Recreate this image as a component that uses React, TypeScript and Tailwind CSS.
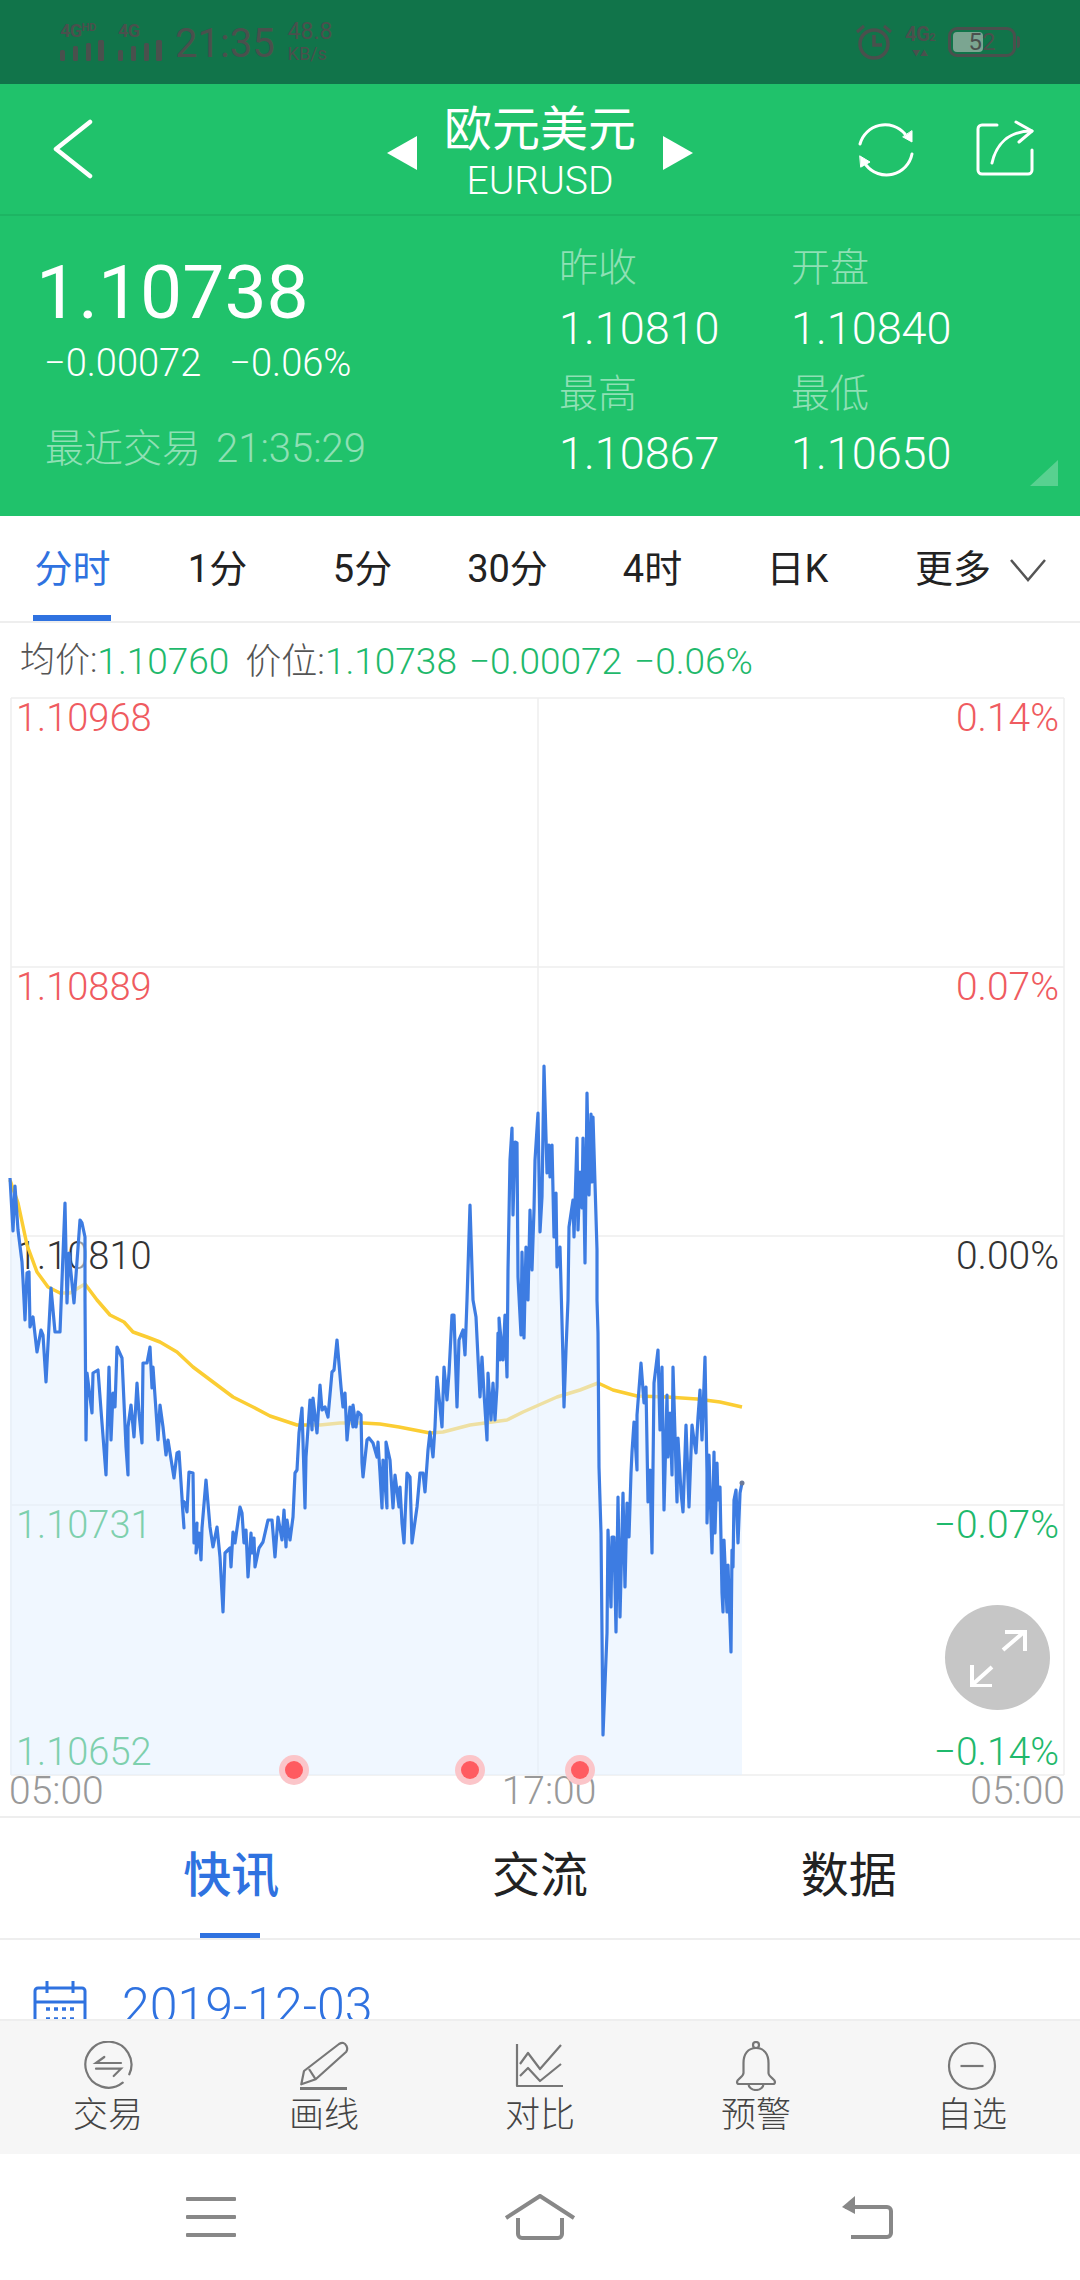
import React from 'react';

const price = '10,1178 13,1231 15,1186 18,1230 22,1262 23,1280 25,1320 27,1273 29,1272 30,1327 33,1317 37,1352 41,1330 43,1335 46,1382 51,1288 55,1332 60,1332 65,1203 67,1303 69,1253 74,1303 80,1220 82,1223 85,1237 85,1300 86,1440 87,1373 92,1413 93,1373 98,1370 101,1410 106,1475 109,1367 111,1440 113,1393 115,1407 117,1347 122,1358 126,1447 128,1475 128,1427 131,1405 134,1437 137,1383 139,1413 142,1443 143,1363 147,1363 150,1347 152,1388 153,1367 158,1440 160,1405 163,1427 166,1455 168,1440 174,1478 177,1453 179,1452 184,1528 182,1500 185,1503 187,1512 189,1472 193,1473 194,1543 197,1523 196,1553 199,1533 201,1560 202,1528 206,1480 210,1527 213,1547 217,1527 220,1557 223,1612 225,1553 230,1548 231,1567 233,1532 235,1543 240,1507 242,1513 244,1543 246,1530 248,1577 251,1533 252,1553 254,1538 255,1567 259,1548 263,1542 268,1520 272,1520 275,1557 278,1517 282,1540 284,1510 286,1547 287,1520 290,1540 293,1517 295,1473 297,1470 299,1433 302,1408 305,1508 306,1457 310,1400 312,1430 313,1398 317,1433 320,1385 322,1410 325,1407 328,1417 332,1372 334,1370 337,1340 341,1387 343,1407 345,1393 347,1440 350,1407 353,1427 353,1405 356,1427 358,1412 361,1415 362,1463 363,1477 367,1440 369,1438 373,1443 377,1457 378,1442 380,1473 382,1508 383,1460 387,1508 386,1442 390,1460 393,1508 395,1475 399,1507 400,1487 402,1523 404,1543 407,1473 410,1477 412,1543 417,1507 420,1473 423,1473 425,1492 428,1450 430,1432 433,1457 435,1427 437,1377 442,1427 444,1367 447,1400 449,1373 452,1315 454,1315 457,1407 459,1340 463,1330 465,1355 467,1300 470,1205 473,1300 476,1317 478,1358 480,1397 482,1357 484,1393 487,1440 488,1373 491,1420 493,1383 495,1420 497,1387 498,1333 500,1360 499,1318 503,1360 505,1315 507,1377 508,1270 510,1160 512,1128 513,1215 515,1142 517,1143 518,1277 521,1335 522,1252 524,1338 526,1247 528,1300 530,1210 532,1270 534,1210 535,1160 538,1113 540,1232 542,1197 544,1066 547,1173 549,1145 550,1177 552,1145 554,1237 556,1193 557,1267 560,1247 563,1360 564,1407 566,1350 568,1300 569,1227 573,1200 574,1237 577,1138 578,1230 580,1172 582,1208 583,1138 585,1263 587,1093 589,1195 591,1114 592,1182 593,1117 597,1250 597,1300 598,1333 599,1467 601,1533 602,1633 603,1735 607,1633 608,1530 611,1607 612,1537 614,1537 616,1632 618,1497 620,1617 623,1493 625,1587 627,1503 629,1537 631,1473 632,1452 634,1422 637,1470 637,1415 641,1363 644,1403 646,1387 648,1502 650,1470 652,1553 654,1383 658,1350 660,1430 662,1367 664,1510 667,1395 668,1457 670,1413 672,1475 673,1367 677,1502 678,1438 681,1492 683,1512 686,1425 689,1507 692,1425 694,1440 696,1453 698,1417 700,1390 702,1440 705,1357 707,1473 707,1523 709,1455 712,1553 714,1452 715,1533 717,1463 718,1500 720,1487 722,1593 723,1612 724,1540 727,1612 728,1565 731,1652 732,1550 733,1567 734,1500 736,1490 738,1543 740,1493 742,1483';

const avg = '10,1180 18,1203 27,1245 37,1272 48,1287 60,1293 70,1293 85,1284 97,1300 110,1315 124,1322 133,1332 147,1337 160,1342 177,1352 193,1367 213,1382 233,1397 253,1407 270,1416 297,1425 320,1425 340,1423 363,1423 380,1424 399,1427 430,1433 443,1432 470,1425 507,1420 523,1412 557,1397 580,1390 598,1383 613,1390 637,1396 667,1397 697,1399 720,1402 742,1407';

const periods = ['分时', '1分', '5分', '30分', '4时', '日K'];

const leftLabels = [
  { text: '1.10968', y: 'top-[1px]', color: 'text-[#ef5b60]' },
  { text: '1.10889', y: 'top-[270px]', color: 'text-[#ef5b60]' },
  { text: '1.10810', y: 'top-[539px]', color: 'text-[#333333]' },
  { text: '1.10731', y: 'top-[808px]', color: 'text-[#00a84a]' },
  { text: '1.10652', y: 'top-[1035px]', color: 'text-[#00a84a]' },
];

const rightLabels = [
  { text: '0.14%', y: 'top-[1px]', color: 'text-[#ef5b60]' },
  { text: '0.07%', y: 'top-[270px]', color: 'text-[#ef5b60]' },
  { text: '0.00%', y: 'top-[539px]', color: 'text-[#333333]' },
  { text: '−0.07%', y: 'top-[808px]', color: 'text-[#1fb96c]' },
  { text: '−0.14%', y: 'top-[1035px]', color: 'text-[#1fb96c]' },
];

const Signal = ({ hd }: { hd?: boolean }) => (
  <div className="flex flex-col">
    <span className="h-[15px] text-[18px] leading-[15px] font-bold tracking-[-0.5px]">
      4G{hd && <span className="text-[11px] align-top leading-[10px]">HD</span>}
    </span>
    <svg className="mt-[2px]" width="46" height="21" viewBox="0 0 46 21" fill="currentColor">
      <rect x="0" y="10" width="5" height="11" rx="1.5" />
      <rect x="13" y="6" width="5" height="15" rx="1.5" />
      <rect x="26" y="3" width="5" height="18" rx="1.5" />
      <rect x="38" y="0" width="6" height="21" rx="1.5" />
    </svg>
  </div>
);

const StatusBar = () => (
  <div className="h-[84px] bg-[#11744a] flex items-center justify-between pl-[60px] pr-[60px] text-[#4a504d] shrink-0">
    <div className="flex items-center">
      <Signal hd />
      <div className="ml-[12px]"><Signal /></div>
      <span className="text-[40px] leading-none ml-[11px] mt-[4px]">21:35</span>
      <div className="ml-[13px] flex flex-col text-[18px] leading-[20px]">
        <span className="text-[23px] leading-[24px]">48.8</span>
        <span>KB/s</span>
      </div>
    </div>
    <div className="flex items-center">
      <svg width="36" height="36" viewBox="0 0 36 36" fill="none" stroke="currentColor" strokeWidth="3.5">
        <circle cx="18" cy="20" r="14" />
        <path d="M18 11v10h8" />
        <path d="M1 8l7-6M35 8l-7-6" strokeWidth="3" />
      </svg>
      <div className="ml-[10px] flex flex-col items-center w-[36px]">
        <span className="text-[20px] leading-[20px] font-bold tracking-[-0.5px]">4G<span className="text-[11px]">2</span></span>
        <span className="text-[8px] leading-[12px]">▼▲</span>
      </div>
      <div className="ml-[10px] mr-[4px] relative w-[68px] h-[30px] rounded-[9px] border-[3px] border-current flex items-center justify-center text-[24px] leading-none">
        <div className="absolute left-[2px] top-[2px] bottom-[2px] w-[30px] rounded-[4px] bg-[#7ba591]" />
        <span className="relative">52</span>
        <div className="absolute right-[-7px] top-[6px] h-[12px] w-[3px] bg-current rounded-r" />
      </div>
    </div>
  </div>
);

const Header = () => (
  <div className="h-[132px] grid grid-cols-[1fr_auto_1fr] items-center border-b-2 border-[#1db563] shrink-0 text-white">
    <div className="pl-[53px] flex">
      <svg width="40" height="60" viewBox="0 0 40 60" fill="none" stroke="white" strokeWidth="4.5" strokeLinecap="round" strokeLinejoin="round">
        <path d="M37 3 3 30l34 27" />
      </svg>
    </div>
    <div className="flex items-center gap-[24px]">
      <svg width="30" height="34" viewBox="0 0 30 34" fill="white" className="mt-[8px]"><path d="M30 0v34L0 17z" /></svg>
      <div className="flex flex-col items-center w-[198px] mt-[6px]">
        <span className="text-[48px] leading-[58px]">欧元美元</span>
        <span className="text-[39px] leading-[44px] font-light">EURUSD</span>
      </div>
      <svg width="30" height="34" viewBox="0 0 30 34" fill="white" className="mt-[8px]"><path d="M0 0v34l30-17z" /></svg>
    </div>
    <div className="flex justify-end items-center gap-[62px] pr-[46px]">
      <svg width="58" height="58" viewBox="0 0 58 58" fill="none" stroke="white" strokeWidth="3" strokeLinecap="round">
        <path d="M4 24A26 26 0 0 1 49 14" />
        <path d="M56 34A26 26 0 0 1 10 45" />
        <path d="M56 11v11l-9-5z" fill="white" strokeWidth="1" />
        <path d="M4 36l10 6-9 5z" fill="white" strokeWidth="1" />
      </svg>
      <svg width="58" height="58" viewBox="0 0 58 58" fill="none" stroke="white" strokeWidth="3" strokeLinecap="round" strokeLinejoin="round">
        <path d="M21 5H6a4 4 0 0 0-4 4v41a4 4 0 0 0 4 4h46a4 4 0 0 0 4-4V30" />
        <path d="M16 43C20 25 32 11 56 11" />
        <path d="M40 2l16 9-13 11" />
      </svg>
    </div>
  </div>
);

const Quote = () => (
  <div className="relative h-[300px] shrink-0 flex text-white">
    <div className="w-[559px] pl-[36px] pt-[32px] flex flex-col">
      <span className="text-[75px] leading-[88px]">1.10738</span>
      <div className="flex gap-[28px] pl-[8px] mt-[3px] text-[38px] leading-[48px] font-light">
        <span>−0.00072</span>
        <span>−0.06%</span>
      </div>
      <div className="flex items-center gap-[15px] pl-[9px] mt-[37px] leading-[50px] font-light text-white/50">
        <span className="text-[39px]">最近交易</span>
        <span className="text-[40px]">21:35:29</span>
      </div>
    </div>
    <div className="flex-1 grid grid-cols-[232px_1fr] content-start pt-[21px] text-[45px] leading-[62px] font-light">
      <div className="text-[39px] text-white/50">昨收</div>
      <div className="text-[39px] text-white/50">开盘</div>
      <div className="-mt-[1px]">1.10810</div>
      <div className="-mt-[1px]">1.10840</div>
      <div className="mt-[3px] text-[39px] text-white/50">最高</div>
      <div className="mt-[3px] text-[39px] text-white/50">最低</div>
      <div className="-mt-[2px]">1.10867</div>
      <div className="-mt-[2px]">1.10650</div>
    </div>
    <svg className="absolute right-[22px] bottom-[30px]" width="28" height="26" viewBox="0 0 28 26" fill="white" fillOpacity="0.25"><path d="M28 0v26H0z" /></svg>
  </div>
);

const Periods = () => (
  <div className="h-[107px] bg-white border-b-2 border-[#eeeeee] flex shrink-0 text-[38px] text-[#222222]">
    {periods.map((p, i) => (
      <div key={p} className="relative w-[145px] flex items-center justify-center pt-[2px]">
        <span className={i === 0 ? 'text-[#2f72e0]' : ''}>{p}</span>
        {i === 0 && <div className="absolute bottom-0 left-[33px] w-[78px] h-[6px] bg-[#2f72e0]" />}
      </div>
    ))}
    <div className="flex-1 flex items-center pl-[45px] gap-[18px] pt-[2px]">
      <span>更多</span>
      <svg width="38" height="24" viewBox="0 0 38 24" fill="none" stroke="#555555" strokeWidth="2.5"><path d="M2 2l17 20L36 2" /></svg>
    </div>
  </div>
);

const InfoLine = () => (
  <div className="h-[74px] bg-white flex items-center pl-[20px] pt-[3px] text-[37px] font-light text-[#555555] shrink-0">
    <span className="text-[35px]">均价:</span>
    <span className="text-[#1fb96c]">1.10760</span>
    <span className="ml-[16px] text-[36px]">价位:</span>
    <span className="text-[#1fb96c]">1.10738</span>
    <span className="ml-[12px] text-[#1fb96c]">−0.00072</span>
    <span className="ml-[12px] text-[#1fb96c]">−0.06%</span>
  </div>
);

const Chart = () => (
  <div className="relative h-[1079px] bg-white shrink-0">
    {leftLabels.map(l => (
      <span key={l.text} className={`absolute left-[16px] text-[38px] leading-[40px] font-light ${l.y} ${l.color}`}>{l.text}</span>
    ))}
    {rightLabels.map(l => (
      <span key={l.text} className={`absolute right-[21px] text-[39px] leading-[40px] font-light ${l.y} ${l.color}`}>{l.text}</span>
    ))}
    <svg className="absolute inset-0 overflow-visible" width="1080" height="1079" viewBox="0 697 1080 1079" fill="none">
      {[698, 967, 1236, 1505, 1775].map(y => (
        <line key={y} x1="11" x2="1064" y1={y} y2={y} stroke="#eeeeee" strokeWidth="1.5" />
      ))}
      {[11, 538, 1064].map(x => (
        <line key={x} x1={x} x2={x} y1="698" y2="1775" stroke="#eeeeee" strokeWidth="1.5" />
      ))}
      <polyline points={avg} stroke="#fbcd33" strokeWidth="3.5" strokeLinejoin="round" />
      <polygon points={`${price} 742,1775 10,1775`} fill="#e4f0ff" fillOpacity="0.55" />
      <polyline points={price} stroke="#3d7ce2" strokeWidth="3.2" strokeLinejoin="round" />
      <circle cx="742" cy="1483" r="2.5" fill="#6c7a99" />
      {[294, 470, 580].map(x => (
        <g key={x}>
          <circle cx={x} cy="1770" r="15" fill="#fbc5c9" />
          <circle cx={x} cy="1770" r="9" fill="#ff5b60" />
        </g>
      ))}
    </svg>
    <div className="absolute left-[945px] top-[908px] w-[105px] h-[105px] rounded-full bg-[#c6c6c6] flex items-center justify-center">
      <svg width="58" height="58" viewBox="0 0 58 58" fill="none" stroke="white" strokeWidth="4">
        <path d="M34 21 55 3M36 3h20v19M23 38 3 56M3 36v21h20" />
      </svg>
    </div>
  </div>
);

const TimeAxis = () => (
  <div className="h-[42px] bg-white border-b-2 border-[#eeeeee] flex justify-between pl-[9px] pr-[15px] text-[39px] leading-[30px] font-light text-[#999999] shrink-0">
    <span>05:00</span>
    <span className="ml-[24px]">17:00</span>
    <span>05:00</span>
  </div>
);

const SectionTabs = () => (
  <div className="h-[122px] bg-white border-b-2 border-[#eeeeee] px-[77px] grid grid-cols-3 text-[48px] text-[#222222] shrink-0">
    <div className="relative flex items-center justify-center pb-[4px] font-medium text-[#2f72e0]">
      快讯
      <div className="absolute bottom-0 left-[123px] w-[60px] h-[5px] bg-[#2f72e0]" />
    </div>
    <div className="flex items-center justify-center pb-[4px]">交流</div>
    <div className="flex items-center justify-center pb-[4px]">数据</div>
  </div>
);

const DateRow = () => (
  <div className="h-[79px] bg-white overflow-hidden flex items-start pl-[33px] gap-[35px] pt-[40px] shrink-0">
    <svg width="54" height="60" viewBox="0 0 54 60" fill="none" stroke="#2f72e0" strokeWidth="3">
      <rect x="2" y="8" width="50" height="50" rx="3" />
      <path d="M2 22h50M14 1v12M40 1v12" />
      <path d="M13 29h28M13 39h28" strokeDasharray="4 4" strokeWidth="3.5" />
    </svg>
    <span className="text-[50px] leading-[56px] font-light text-[#2f72e0] -mt-[2px]">2019-12-03</span>
  </div>
);

const ToolIcon = ({ name }: { name: string }) => {
  if (name === '交易') {
    return (
      <svg width="50" height="50" viewBox="0 0 50 50" fill="none" stroke="#777777" strokeWidth="2.2" strokeLinecap="round">
        <path d="M39.7 41.7A23 23 0 1 1 46.3 33.3" />
        <path d="M21.3 16 13 22H38M13 27.7H38L30.7 35" />
      </svg>
    );
  }
  if (name === '画线') {
    return (
      <svg width="50" height="50" viewBox="0 0 50 50" fill="none" stroke="#777777" strokeWidth="2.2" strokeLinejoin="round">
        <path d="M5 30 40 3Q45 0 47.5 5 49 8 47.3 10.7L16.7 38.3 2.3 43.3Z" />
        <path d="M10 28 16.7 38.3" />
        <path d="M1 47.5H48" strokeWidth="3" />
      </svg>
    );
  }
  if (name === '对比') {
    return (
      <svg width="50" height="50" viewBox="0 0 50 50" fill="none" stroke="#777777" strokeWidth="2.2" strokeLinejoin="round">
        <path d="M2 3V45H48" />
        <path d="M5 23 13 12 25 28 46 4" />
        <path d="M5 35 13 27 25 40 46 23" />
      </svg>
    );
  }
  if (name === '预警') {
    return (
      <svg width="42" height="50" viewBox="0 0 42 50" fill="none" stroke="#777777" strokeWidth="2.2" strokeLinejoin="round">
        <path d="M21 7C13 7 8.5 13 8.5 22V32C8.5 36 2 38 2 41Q2 43 4 43H38Q40 43 40 41C40 38 33.5 36 33.5 32V22C33.5 13 29 7 21 7Z" />
        <path d="M13.5 43a7.5 6 0 0 0 15 0" />
        <circle cx="21" cy="4" r="3" />
      </svg>
    );
  }
  return (
    <svg width="50" height="50" viewBox="0 0 50 50" fill="none" stroke="#777777" strokeWidth="2.2">
      <circle cx="25" cy="25" r="23" />
      <path d="M13.5 25h23" />
    </svg>
  );
};

const Toolbar = () => (
  <div className="h-[135px] bg-[#f6f6f6] border-t-2 border-[#eeeeee] grid grid-cols-5 shrink-0">
    {['交易', '画线', '对比', '预警', '自选'].map(t => (
      <div key={t} className="flex flex-col items-center pt-[18px]">
        <div className="h-[54px] flex items-center justify-center"><ToolIcon name={t} /></div>
        <span className="mt-[2px] text-[35px] leading-[42px] text-[#444444] font-light">{t}</span>
      </div>
    ))}
  </div>
);

const NavBar = () => (
  <div className="flex-1 bg-white grid grid-cols-3 items-center">
    <div className="flex justify-center -mr-[62px]">
      <svg width="50" height="40" viewBox="0 0 50 40" fill="#888888">
        <rect y="0" width="50" height="4" rx="1" />
        <rect y="18" width="50" height="4" rx="1" />
        <rect y="36" width="50" height="4" rx="1" />
      </svg>
    </div>
    <div className="flex justify-center">
      <svg width="72" height="46" viewBox="0 0 72 46" fill="none" stroke="#888888" strokeWidth="4" strokeLinejoin="round">
        <path d="M2 24 36 2l34 22" />
        <path d="M14 24v16a4 4 0 0 0 4 4h36a4 4 0 0 0 4-4V24" />
      </svg>
    </div>
    <div className="flex justify-center -ml-[66px]">
      <svg width="52" height="44" viewBox="0 0 52 44" fill="none" stroke="#888888" strokeWidth="4">
        <path d="M4 12h42a4 4 0 0 1 4 4v22a4 4 0 0 1-4 4H10" />
        <path d="M14 1v18L1 12z" fill="#888888" stroke="none" />
      </svg>
    </div>
  </div>
);

export default function App() {
  return (
    <div className="w-[1080px] h-[2280px] overflow-hidden flex flex-col bg-[#20c26b] font-['Roboto','Noto_Sans_CJK_SC',sans-serif]">
      <StatusBar />
      <Header />
      <Quote />
      <Periods />
      <InfoLine />
      <Chart />
      <TimeAxis />
      <SectionTabs />
      <DateRow />
      <Toolbar />
      <NavBar />
    </div>
  );
}
